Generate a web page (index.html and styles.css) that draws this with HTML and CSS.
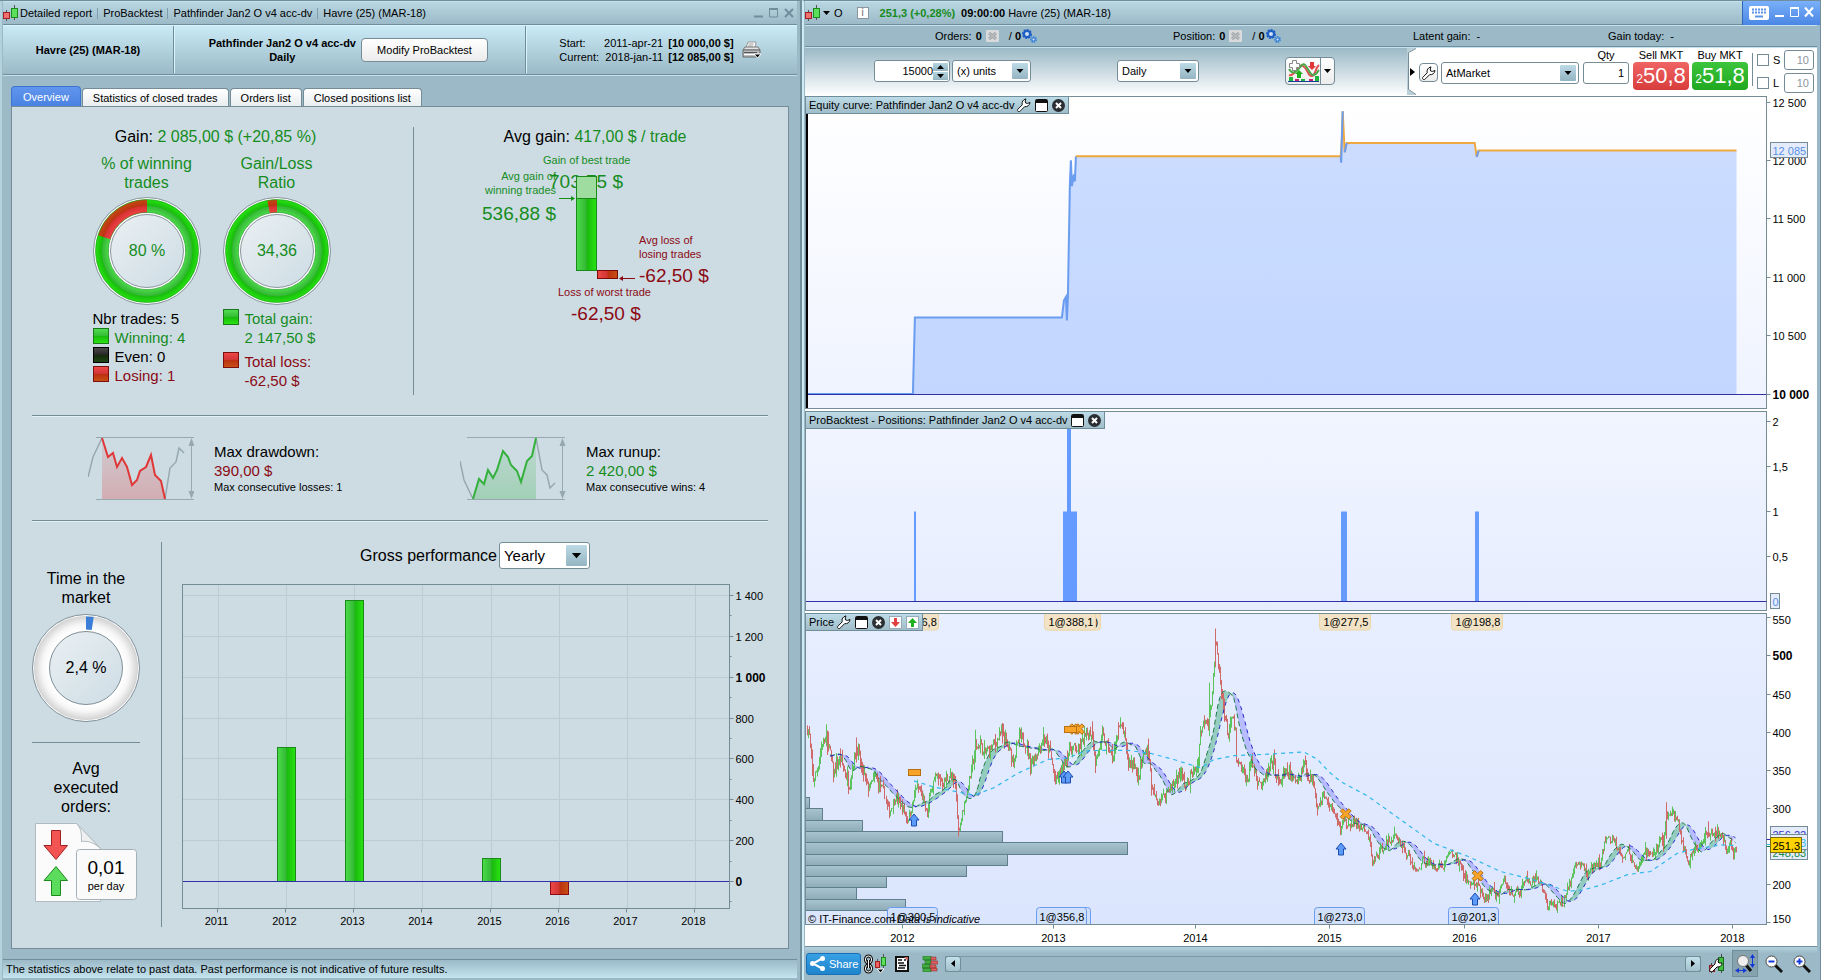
FILE: index.html
```html
<!DOCTYPE html>
<html lang="en">
<head>
    <meta charset="UTF-8">
    <meta name="viewport" content="width=device-width, initial-scale=1.0">
    <title>Detailed report - ProBacktest</title>
    <link rel="stylesheet" href="styles.css">
</head>
<body>

<!-- shared gradients and icons -->
<svg class="defs" width="0" height="0" aria-hidden="true">
    <defs>
        <linearGradient id="g-green" x1="0" x2="1" y1="0" y2="0">
            <stop offset="0" stop-color="#4bdc4b"/><stop offset=".49" stop-color="#34b834"/>
            <stop offset=".51" stop-color="#18b90c"/><stop offset="1" stop-color="#2ae314"/>
        </linearGradient>
        <linearGradient id="g-red" x1="0" x2="1" y1="0" y2="0">
            <stop offset="0" stop-color="#ee4848"/><stop offset=".49" stop-color="#d23434"/>
            <stop offset=".51" stop-color="#bb3010"/><stop offset="1" stop-color="#c85014"/>
        </linearGradient>
        <radialGradient id="r-green" gradientUnits="userSpaceOnUse" cx="54" cy="54" r="52">
            <stop offset=".73" stop-color="#4edc4e"/><stop offset=".86" stop-color="#34b834"/>
            <stop offset=".88" stop-color="#18bd0c"/><stop offset="1" stop-color="#28e612"/>
        </radialGradient>
        <radialGradient id="r-red" gradientUnits="userSpaceOnUse" cx="54" cy="54" r="52">
            <stop offset=".73" stop-color="#ee4444"/><stop offset=".86" stop-color="#d63232"/>
            <stop offset=".88" stop-color="#bd3412"/><stop offset="1" stop-color="#c44c14"/>
        </radialGradient>
        <radialGradient id="r-white" gradientUnits="userSpaceOnUse" cx="54" cy="54" r="52">
            <stop offset=".73" stop-color="#fff"/><stop offset=".84" stop-color="#f6f6f6"/>
            <stop offset="1" stop-color="#d2d2d2"/>
        </radialGradient>
        <linearGradient id="g-disc" x1="0" x2="1" y1="0" y2="1">
            <stop offset="0" stop-color="#eaf0f3"/><stop offset="1" stop-color="#cddce4"/>
        </linearGradient>
        <linearGradient id="g-dd" x1="0" x2="0" y1="0" y2="1">
            <stop offset="0" stop-color="#e04040" stop-opacity=".1"/><stop offset="1" stop-color="#e04040" stop-opacity=".3"/>
        </linearGradient>
        <linearGradient id="g-ru" x1="0" x2="0" y1="0" y2="1">
            <stop offset="0" stop-color="#3cb44a" stop-opacity=".1"/><stop offset="1" stop-color="#3cb44a" stop-opacity=".3"/>
        </linearGradient>
        <symbol id="i-candles" viewBox="0 0 16 17">
            <path d="M3.500 5v11M11.500 0v15" stroke="#555"/>
            <rect x=".5" y="7.500" width="6" height="6" fill="#f07070" stroke="#a02020"/>
            <rect x="8.500" y="3.500" width="6" height="9" fill="#5ce05c" stroke="#1c8a1c"/>
        </symbol>
        <symbol id="i-wrench" viewBox="0 0 14 14">
            <path d="M1 13.300c-1-.9-.6-1.600.2-2.400l4-4C4.500 4 6 1.500 9 .9L8.200 3l.4 2 2 .4L13 4.500c-.4 3-2.600 4.500-5.400 4.200l-4 4c-.9.900-1.700 1.300-2.600.6z" fill="#fff" stroke="#111"/>
        </symbol>
        <symbol id="i-window" viewBox="0 0 13 13">
            <rect x=".5" y=".5" width="12" height="12" rx="1" fill="#fff" stroke="#111"/>
            <rect x="1" y="1" width="11" height="3" fill="#111"/>
        </symbol>
        <symbol id="i-close" viewBox="0 0 13 13">
            <circle cx="6.500" cy="6.500" r="6.500" fill="#2b2f33"/>
            <path d="M4 4l5 5M9 4l-5 5" stroke="#fff" stroke-width="2"/>
        </symbol>
        <symbol id="i-cancel" viewBox="0 0 13 12">
            <rect width="13" height="12" rx="1" fill="#d8dadb"/>
            <path d="M3 3l7 6M10 3l-7 6" stroke="#a4a8aa" stroke-width="3"/>
            <path d="M3 3l7 6M10 3l-7 6" stroke="#c2c5c6" stroke-width="1"/>
        </symbol>
        <symbol id="i-gears" viewBox="0 0 15 14">
            <circle cx="5" cy="5" r="4" fill="none" stroke="#1f5fc4" stroke-width="2" stroke-dasharray="2 1"/>
            <circle cx="5" cy="5" r="3" fill="#cfe2f4" stroke="#1f5fc4" stroke-width="2"/>
            <circle cx="11.500" cy="10.500" r="2.500" fill="none" stroke="#3f8ae0" stroke-width="2" stroke-dasharray="1.500 .7"/>
            <circle cx="11.500" cy="10.500" r="1.500" fill="#cfe2f4" stroke="#2f74d0"/>
        </symbol>
    </defs>
</svg>

<div class="desktop">

    <!-- report window -->
    <section class="window report">
        <header class="titlebar">
            <svg class="ico-candles"><use href="#i-candles"/></svg>
            <span>Detailed report</span><i></i>
            <span>ProBacktest</span><i></i>
            <span>Pathfinder Jan2 O v4 acc-dv</span><i></i>
            <span>Havre (25) (MAR-18)</span>
            <svg class="win-btns" width="42" height="12" viewBox="0 0 42 12" fill="none" stroke="#6f8d9b">
                <path d="M1 9.500h9" stroke-width="2"/>
                <path d="M16.500 2v8h8V1.500h-8z"/><path d="M16 2h9" stroke-width="2"/>
                <path d="M32 2l8 8M40 2l-8 8" stroke-width="2"/>
            </svg>
        </header>

        <div class="report-head">
            <div class="head-cell head-name">Havre (25) (MAR-18)</div>
            <div class="head-cell head-system">
                <div>Pathfinder Jan2 O v4 acc-dv<br>Daily</div>
                <button class="btn">Modify ProBacktest</button>
            </div>
            <div class="head-cell head-dates">
                <dl>
                    <dt>Start:</dt><dd>2011-apr-21</dd><dd><b>[10 000,00 $]</b></dd>
                    <dt>Current:</dt><dd>2018-jan-11</dd><dd><b>[12 085,00 $]</b></dd>
                </dl>
                <button class="icon-btn" aria-label="Print">
                    <svg width="19" height="18" viewBox="0 0 19 18">
                        <path d="M6 1h8l-1 6H4z" fill="#fff" stroke="#999"/>
                        <path d="M6.500 3h5M6 5h5" stroke="#999"/>
                        <path d="M3 6h13l2 3H1z" fill="#e4e4e4" stroke="#777"/>
                        <path d="M1 9h17v5l-2 2H1z" fill="#b8bcbe" stroke="#666"/>
                        <path d="M2 11.500h13" stroke="#555"/><path d="M2 13.500h11" stroke="#fff"/>
                        <path d="M12 13h7l-3.500 4z" fill="#000" stroke="#fff"/>
                    </svg>
                </button>
            </div>
        </div>

        <nav class="tabs">
            <button class="tab active">Overview</button>
            <button class="tab">Statistics of closed trades</button>
            <button class="tab">Orders list</button>
            <button class="tab">Closed positions list</button>
        </nav>

        <div class="panel">
            <div class="row-gain">
                <div class="gain">
                    <h2>Gain: <span class="green">2 085,00 $ (+20,85 %)</span></h2>
                    <div class="donuts">
                        <div>
                            <h3 class="green">% of winning<br>trades</h3>
                            <svg class="donut" width="108" height="108" viewBox="0 0 108 108" fill="none">
                                <circle cx="54" cy="54" r="52.500" fill="#fff" stroke="#fff"/>
                                <circle cx="54" cy="54" r="53.500" stroke="#8b979d"/>
                                <circle cx="54" cy="54" r="45" stroke="url(#r-green)" stroke-width="13"/>
                                <circle cx="54" cy="54" r="45" stroke="url(#r-red)" stroke-width="13" pathLength="100" stroke-dasharray="20 80" stroke-dashoffset="-80" transform="rotate(-90 54 54)"/>
                                <circle cx="54" cy="54" r="51.500" stroke="#1c9a1c" stroke-width=".6"/>
                                <circle cx="54" cy="54" r="38.500" stroke="#1c8a1c" stroke-width=".6"/>
                                <circle cx="54" cy="54" r="37" fill="#fff" stroke="#fff" stroke-width="2"/>
                                <circle cx="54" cy="54" r="36.500" fill="url(#g-disc)" stroke="#8b979d"/>
                                <text x="54" y="59" text-anchor="middle" class="t16 fgreen">80 %</text>
                            </svg>
                            <ul class="legend">
                                <li>Nbr trades: 5</li>
                                <li class="green"><i class="sw sw-green"></i>Winning: 4</li>
                                <li><i class="sw sw-black"></i>Even: 0</li>
                                <li class="red"><i class="sw sw-red"></i>Losing: 1</li>
                            </ul>
                        </div>
                        <div>
                            <h3 class="green">Gain/Loss<br>Ratio</h3>
                            <svg class="donut" width="108" height="108" viewBox="0 0 108 108" fill="none">
                                <circle cx="54" cy="54" r="52.500" fill="#fff" stroke="#fff"/>
                                <circle cx="54" cy="54" r="53.500" stroke="#8b979d"/>
                                <circle cx="54" cy="54" r="45" stroke="url(#r-green)" stroke-width="13"/>
                                <circle cx="54" cy="54" r="45" stroke="url(#r-red)" stroke-width="13" pathLength="100" stroke-dasharray="3 97" stroke-dashoffset="-97" transform="rotate(-90 54 54)"/>
                                <circle cx="54" cy="54" r="51.500" stroke="#1c9a1c" stroke-width=".6"/>
                                <circle cx="54" cy="54" r="38.500" stroke="#1c8a1c" stroke-width=".6"/>
                                <circle cx="54" cy="54" r="37" fill="#fff" stroke="#fff" stroke-width="2"/>
                                <circle cx="54" cy="54" r="36.500" fill="url(#g-disc)" stroke="#8b979d"/>
                                <text x="54" y="59" text-anchor="middle" class="t16 fgreen">34,36</text>
                            </svg>
                            <ul class="legend">
                                <li class="green"><i class="sw sw-green"></i>Total gain:<br>2 147,50 $</li>
                                <li class="red loss"><i class="sw sw-red"></i>Total loss:<br>-62,50 $</li>
                            </ul>
                        </div>
                    </div>
                </div>

                <div class="avg">
                    <h2>Avg gain: <span class="green">417,00 $ / trade</span></h2>
                    <svg width="240" height="176" viewBox="475 150 240 176">
                        <g class="fgreen">
                            <text x="543" y="164" class="t11">Gain of best trade</text>
                            <text x="549" y="188" class="t19">703,75 $</text>
                            <text x="556" y="180" class="t11" text-anchor="end">Avg gain of</text>
                            <text x="556" y="194" class="t11" text-anchor="end">winning trades</text>
                            <text x="556" y="220" class="t19" text-anchor="end">536,88 $</text>
                        </g>
                        <rect x="576.500" y="176.500" width="20" height="22" fill="#9fdc9f" stroke="#1a8a1a"/>
                        <rect x="576.500" y="198.500" width="20" height="72" fill="url(#g-green)" stroke="#1a8a1a"/>
                        <rect x="597.500" y="270.500" width="20" height="8" fill="url(#g-red)" stroke="#7a0a0a"/>
                        <path d="M559 198.500h13" stroke="#149014"/><path d="M571 196l4 2.500-4 2.500z" fill="#149014"/>
                        <path d="M622 278.500h13" stroke="#8b0a14"/><path d="M623 276l-4 2.500 4 2.500z" fill="#8b0a14"/>
                        <g class="fred">
                            <text x="639" y="244" class="t11">Avg loss of</text>
                            <text x="639" y="258" class="t11">losing trades</text>
                            <text x="639" y="282" class="t19">-62,50 $</text>
                            <text x="558" y="296" class="t11">Loss of worst trade</text>
                            <text x="571" y="320" class="t19">-62,50 $</text>
                        </g>
                    </svg>
                </div>
            </div>

            <div class="row-max">
                <div class="max">
                    <svg width="106" height="65" viewBox="0 0 106 65" fill="none" stroke="#98a8b0">
                        <path d="M8 1.500h98M8 63.500h98" stroke-width="1"/>
                        <path d="M103.500 4v57"/><path d="M103.500 2l3 8h-6zM103.500 63l3-8h-6z" fill="#98a8b0" stroke="none"/>
                        <path d="M0 41L5 21L14 2M77 63L82 32L88 26L91 12L96 17" stroke-width="1.500"/>
                        <path d="M14 2L20 21L25 17L29 31L34 22L39 31L44 49L49 44L52 35L58 31L63 19L67 39L73 45L77 63H14z" fill="url(#g-dd)" stroke="none"/>
                        <path d="M14 2L20 21L25 17L29 31L34 22L39 31L44 49L49 44L52 35L58 31L63 19L67 39L73 45L77 63" stroke="#e03838" stroke-width="2"/>
                    </svg>
                    <div>
                        <p>Max drawdown:</p>
                        <p class="red">390,00 $</p>
                        <small>Max consecutive losses: 1</small>
                    </div>
                </div>
                <div class="max">
                    <svg width="106" height="65" viewBox="0 0 106 65" fill="none" stroke="#98a8b0">
                        <path d="M7 1.500h98M7 63.500h98"/>
                        <path d="M102.500 4v57"/><path d="M102.500 2l3 8h-6zM102.500 63l3-8h-6z" fill="#98a8b0" stroke="none"/>
                        <path d="M0 25L4 44L13 63M76 2L82 34L87 39L90 52L95 47" stroke-width="1.500"/>
                        <path d="M13 63L19 43L24 48L28 34L33 42L37 34L43 15L48 21L51 29L57 35L61 46L67 25L72 20L76 2V63z" fill="url(#g-ru)" stroke="none"/>
                        <path d="M13 63L19 43L24 48L28 34L33 42L37 34L43 15L48 21L51 29L57 35L61 46L67 25L72 20L76 2" stroke="#34b03c" stroke-width="2"/>
                    </svg>
                    <div>
                        <p>Max runup:</p>
                        <p class="green">2 420,00 $</p>
                        <small>Max consecutive wins: 4</small>
                    </div>
                </div>
            </div>

            <div class="row-perf">
                <div class="market">
                    <h3>Time in the<br>market</h3>
                    <svg class="donut" width="108" height="108" viewBox="0 0 108 108" fill="none">
                        <circle cx="54" cy="54" r="53" fill="#fff" stroke="#fff"/>
                        <circle cx="54" cy="54" r="53.500" stroke="#7f8f97"/>
                        <circle cx="54" cy="54" r="45" stroke="url(#r-white)" stroke-width="14"/>
                        <circle cx="54" cy="54" r="45" stroke="#3a7ed8" stroke-width="13" pathLength="100" stroke-dasharray="2.400 97.600" transform="rotate(-90 54 54)"/>
                        <circle cx="54" cy="54" r="36.500" fill="url(#g-disc)" stroke="#7f8f97"/>
                        <text x="54" y="59" text-anchor="middle" fill="#000" class="t16">2,4 %</text>
                    </svg>
                    <hr>
                    <h3>Avg<br>executed<br>orders:</h3>
                    <svg class="orders" width="102" height="80" viewBox="0 0 102 80">
                        <path d="M.5.5h41l24 25v53H.5z" fill="#fbfbfb" stroke="#b0bac0"/>
                        <path d="M41.500.5c5 5 5 10 5 18 8-1 13 2 19 7z" fill="#eef0f1" stroke="#b0bac0"/>
                        <path d="M16.500 7.500h9v15h7l-11.500 14-12-14h7.500z" fill="#f25454" stroke="#a02020"/>
                        <path d="M16.500 72.500h9v-15h7l-11.500-14-12 14h7.500z" fill="#5cdc5c" stroke="#1c8a1c"/>
                        <rect x="41.500" y="26.500" width="60" height="50" rx="3" fill="#fafafa" stroke="#a4b0b6"/>
                        <text x="71" y="51" text-anchor="middle" class="t19">0,01</text>
                        <text x="71" y="67" text-anchor="middle" class="t11">per day</text>
                    </svg>
                </div>
                <div class="perf">
                    <div class="perf-head">
                        <label for="period">Gross performance</label>
                        <select id="period" class="select big"><option>Yearly</option></select>
                    </div>
                    <div class="chart" id="chart-perf"></div>
                </div>
            </div>
        </div>

        <footer class="statusbar">The statistics above relate to past data. Past performance is not indicative of future results.</footer>
    </section>

    <!-- trading window -->
    <section class="window trading">
        <header class="titlebar">
            <svg class="ico-candles"><use href="#i-candles"/></svg>
            <svg width="7" height="4" viewBox="0 0 7 4"><path d="M0 0h7L3.500 4z"/></svg>
            <span class="code">O</span>
            <button class="info" aria-label="Information">i</button>
            <b class="green quote">251,3 (+0,28%)</b>
            <b>09:00:00</b>
            <span>Havre (25) (MAR-18)</span>
            <div class="win-active">
                <svg width="66" height="15" viewBox="0 0 66 15">
                    <rect width="20" height="14" rx="2" fill="#fff"/>
                    <path d="M3 3.500h14M3 6.500h14" stroke="#5a94ea" stroke-width="2" stroke-dasharray="2 1"/>
                    <path d="M6 10.500h8" stroke="#5a94ea" stroke-width="2"/>
                    <path d="M26 10h9M41 2h9" stroke="#fff" stroke-width="2"/>
                    <path d="M41.500 2v8.500h8V2" stroke="#fff" fill="none"/>
                    <path d="M56 1.500l8 9M64 1.500l-8 9" stroke="#fff" stroke-width="2"/>
                </svg>
            </div>
        </header>

        <div class="account">
            <span>Orders: <b>0</b> <svg width="13" height="12"><use href="#i-cancel"/></svg> <em>/ <b>0</b></em><svg width="15" height="14"><use href="#i-gears"/></svg></span>
            <span>Position: <b>0</b> <svg width="13" height="12"><use href="#i-cancel"/></svg> <em>/ <b>0</b></em><svg width="15" height="14"><use href="#i-gears"/></svg></span>
            <span>Latent gain: &nbsp;-</span>
            <span>Gain today: &nbsp;-</span>
        </div>

        <div class="toolbar">
            <div class="tools">
                <div class="group">
                    <div class="spin">
                        <input type="text" value="15000" aria-label="Number of units">
                        <div>
                            <button aria-label="More"><svg width="7" height="4" viewBox="0 0 7 4"><path d="M0 4h7L3.500 0z"/></svg></button>
                            <button aria-label="Less"><svg width="7" height="4" viewBox="0 0 7 4"><path d="M0 0h7L3.500 4z"/></svg></button>
                        </div>
                    </div>
                    <select class="select units" aria-label="Unit"><option>(x) units</option></select>
                </div>
                <select class="select daily" aria-label="Timeframe"><option>Daily</option></select>
                <button class="btn indic" aria-label="Add indicator">
                    <svg width="33" height="24" viewBox="0 0 33 24" fill="none">
                        <path d="M2 16c6 2 9-12 14-9s5 11 9 10 3-8 7-11" stroke="#e05050" stroke-width="2"/>
                        <path d="M2 10c5 8 9 0 13-4s7 10 11 10 4-3 6-5" stroke="#48a848" stroke-width="2"/>
                        <path d="M10 19v-4H8l4-4 4 4h-2v4z" fill="#20b020"/><path d="M23 3v4h-2l4 4 4-4h-2V3z" fill="#e03838"/>
                        <path d="M5.500 1.500h4v3h3v4h-3v3h-4v-3h-3v-4h3z" fill="#fff" stroke="#888"/>
                        <path d="M2 18h4v4H2zM14 20h4v2h-4zM28 17h4v5h-4z" fill="#20b838"/><path d="M8 20h4v2H8zM22 20h4v2h-4z" fill="#c02870"/>
                        <path d="M1 22.500h31" stroke="#143c9c"/>
                    </svg>
                    <span><svg width="7" height="4" viewBox="0 0 7 4"><path d="M0 0h7L3.500 4z"/></svg></span>
                </button>
            </div>
            <div class="order">
                <svg class="handle" width="12" height="48" viewBox="0 0 12 48">
                    <path d="M0 0H9L1.500 4V42L9 47H0z" fill="#b9ced7"/>
                    <path d="M9 .5L1.500 4.500V41.500L9 46.500" fill="none" stroke="#758c97"/>
                    <path d="M3 20v8l5-4z"/>
                </svg>
                <button class="btn wrench" aria-label="Order settings"><svg width="14" height="14"><use href="#i-wrench"/></svg></button>
                <select class="select market-type" aria-label="Order type"><option>AtMarket</option></select>
                <div class="stack">
                    <label for="qty">Qty</label>
                    <input id="qty" type="text" value="1">
                </div>
                <div class="stack">
                    <span>Sell MKT</span>
                    <button class="deal sell"><small>2</small>50,8</button>
                </div>
                <div class="stack">
                    <span>Buy MKT</span>
                    <button class="deal buy"><small>2</small>51,8</button>
                </div>
                <div class="stops">
                    <label><input type="checkbox"> <span>S</span><input type="text" value="10" aria-label="Stop distance"></label>
                    <label><input type="checkbox"> <span>L</span><input type="text" value="10" aria-label="Limit distance"></label>
                </div>
            </div>
        </div>

        <div class="charts">
            <div class="pane pane-equity">
                <div class="chart" id="chart-equity"></div>
                <div class="pane-head">
                    <span>Equity curve: Pathfinder Jan2 O v4 acc-dv</span>
                    <svg width="14" height="14"><use href="#i-wrench"/></svg>
                    <svg width="13" height="13"><use href="#i-window"/></svg>
                    <svg width="13" height="13"><use href="#i-close"/></svg>
                </div>
            </div>
            <div class="pane pane-pos">
                <div class="chart" id="chart-pos"></div>
                <div class="pane-head">
                    <span>ProBacktest - Positions: Pathfinder Jan2 O v4 acc-dv</span>
                    <svg width="13" height="13"><use href="#i-window"/></svg>
                    <svg width="13" height="13"><use href="#i-close"/></svg>
                </div>
            </div>
            <div class="pane pane-price">
                <div class="chart" id="chart-price"></div>
                <div class="pane-head">
                    <span>Price</span>
                    <svg width="14" height="14"><use href="#i-wrench"/></svg>
                    <svg width="13" height="13"><use href="#i-window"/></svg>
                    <svg width="13" height="13"><use href="#i-close"/></svg>
                    <svg width="13" height="13" viewBox="0 0 13 13"><rect x=".5" y=".5" width="12" height="12" fill="#fff" stroke="#9ab"/><path d="M5 2h3v4h3l-4.500 5L2 6h3z" fill="#e04040"/></svg>
                    <svg width="13" height="13" viewBox="0 0 13 13"><rect x=".5" y=".5" width="12" height="12" fill="#fff" stroke="#9ab"/><path d="M5 11h3V7h3L6.500 2 2 7h3z" fill="#20b020"/></svg>
                </div>
            </div>
        </div>

        <footer class="bottombar">
            <button class="share">
                <svg width="15" height="15" viewBox="0 0 15 15"><path d="M13 2L3 7.500 13 13" fill="none" stroke="#fff" stroke-width="2"/><circle cx="12.500" cy="2.500" r="2.500" fill="#fff"/><circle cx="2.500" cy="7.500" r="2.500" fill="#fff"/><circle cx="12.500" cy="12.500" r="2.500" fill="#fff"/></svg>
                Share
            </button>
            <button class="icon-btn" aria-label="Link windows">
                <svg width="24" height="20" viewBox="0 0 24 20" fill="none">
                    <rect x="1.500" y="2" width="6" height="7" rx="3" stroke="#111" stroke-width="3"/><rect x="1.500" y="11" width="6" height="7" rx="3" stroke="#111" stroke-width="3"/>
                    <rect x="1.500" y="2" width="6" height="7" rx="3" stroke="#fff"/><rect x="1.500" y="11" width="6" height="7" rx="3" stroke="#fff"/><path d="M4.500 6v8" stroke="#111" stroke-width="3"/><path d="M4.500 6v8" stroke="#fff"/>
                    <path d="M13.500 5v10M19.500 0v14" stroke="#555"/><rect x="11.500" y="7.500" width="4" height="6" fill="#f06060" stroke="#a02020"/><rect x="17.500" y="3.500" width="4" height="8" fill="#5ce05c" stroke="#1c8a1c"/>
                    <path d="M13 15h7l-3.500 4z" fill="#000" stroke="#fff"/>
                </svg>
            </button>
            <button class="icon-btn" aria-label="News">
                <svg width="14" height="16" viewBox="0 0 14 16"><rect x="1" y="1" width="12" height="14" fill="#fff" stroke="#111" stroke-width="2"/><path d="M3 4h4M3 7h6M4 9.500h7M3 12h7M9 4h2" stroke="#111" stroke-width="1.500"/><path d="M9 1h4v4z" fill="#c06060"/></svg>
            </button>
            <button class="icon-btn book" aria-label="Order book">
                <svg width="16" height="16" viewBox="0 0 16 16"><path d="M1 0h8v4H1zM3 4h6v4H3zM0 8h8v4H0zM1 12h8v4H1z" fill="#3fae3f" stroke="#2a6a2a" stroke-width=".6"/><path d="M9 1h5v3H9zM9 5h7v3H9zM8 9h6v3H8zM9 12h6v3H9z" fill="#e06060" stroke="#8a3030" stroke-width=".6"/></svg>
            </button>
            <div class="scroll">
                <button aria-label="Scroll left"><svg width="4" height="7" viewBox="0 0 4 7"><path d="M4 0v7L0 3.500z"/></svg></button>
                <button aria-label="Scroll right"><svg width="4" height="7" viewBox="0 0 4 7"><path d="M0 0v7l4-3.500z"/></svg></button>
            </div>
            <button class="icon-btn" aria-label="Chart settings">
                <svg width="17" height="20" viewBox="0 0 17 20"><path d="M3.500 9v10M13.500 0v19" stroke="#444"/><rect x="1.500" y="11.500" width="5" height="6" fill="#d06060" stroke="#802020"/><rect x="10.500" y="3.500" width="5" height="13" fill="#3fc03f" stroke="#1c6a1c"/><path d="M2 17c-1-1 0-2 1-3l4-4c0-3 1-5 4-5l-1 3 1 1h3c0 3-2 4-5 4l-4 4c-1 1-2 1-3 0z" fill="#fff" stroke="#111"/></svg>
            </button>
            <button class="icon-btn pressed" aria-label="Auto zoom">
                <svg width="20" height="19" viewBox="0 0 20 19"><path d="M11 11l5 6" stroke="#111" stroke-width="3"/><circle cx="8" cy="7" r="5.500" fill="#eee" stroke="#777"/><path d="M17.500 3v8M3 16.500h6" stroke="#1438d8"/><path d="M15 4l2.500-4L20 4zM15 10l2.500 4 2.500-4zM4 14l-4 2.500L4 19zM8 14l4 2.500L8 19z" fill="#1438d8"/></svg>
            </button>
            <button class="icon-btn" aria-label="Zoom out">
                <svg width="18" height="18" viewBox="0 0 18 18"><path d="M10 10l7 7" stroke="#111" stroke-width="3"/><circle cx="6.500" cy="6.500" r="5.500" fill="#fff" stroke="#444"/><path d="M3.500 6.500h6" stroke="#1438d8" stroke-width="2"/></svg>
            </button>
            <button class="icon-btn zoom-in" aria-label="Zoom in">
                <svg width="18" height="18" viewBox="0 0 18 18"><path d="M10 10l7 7" stroke="#111" stroke-width="3"/><circle cx="6.500" cy="6.500" r="5.500" fill="#fff" stroke="#444"/><path d="M3.500 6.500h6M6.500 3.500v6" stroke="#1438d8" stroke-width="2"/></svg>
            </button>
        </footer>
    </section>
</div>

<script src="charts.js"></script>
</body>
</html>
```
FILE: styles.css
```css
* {
    box-sizing: border-box;
}

body {
    margin: 0;
    font-family: "Liberation Sans", Arial, sans-serif;
    font-size: 11px;
    line-height: 14px;
    color: #000;
    background-color: #9bb9c6;
}

h2, h3, p, ul, dl, dd {
    margin: 0;
    padding: 0;
    font-weight: normal;
}

h2 {
    font-size: 16px;
    line-height: 20px;
}

h3 {
    font-size: 16px;
    line-height: 19px;
}

button, input, select {
    font: inherit;
    color: inherit;
    margin: 0;
    padding: 0;
}

svg {
    display: block;
    flex-shrink: 0;
}

.defs {
    position: absolute;
}

.green { color: #168c1e; }
.red { color: #8b0a14; }
.fgreen { fill: #168c1e; }
.fred { fill: #8b0a14; }
.t11 { font-size: 11px; }
.t16 { font-size: 16px; }
.t19 { font-size: 19px; }

/* windows */
.desktop {
    display: grid;
    grid-template-columns: 802fr 1019fr;
    height: 100vh;
    min-height: 980px;
}

.window {
    display: flex;
    flex-direction: column;
    min-width: 0;
    border: solid #6f8d9b;
    border-width: 1px 0 0 0;
    background-color: #9bb9c6;
}

.report {
    border-right-width: 2px;
    padding: 0 3px 2px 3px;
    box-shadow: inset 2px 0 #b4d2de;
}

.trading {
    border-right-width: 1px;
    border-left: 2px solid #cdeaf5;
    padding: 0 3px 0 1px;
}

.titlebar {
    display: flex;
    align-items: center;
    height: 24px;
    flex-shrink: 0;
    border-top: 1px solid #c4e2ee;
    border-bottom: 1px solid #6f8d9b;
    background: linear-gradient(#b9d7e3, #9bb9c6);
}

.titlebar i {
    width: 1px;
    height: 11px;
    margin: 0 5px;
    background-color: #7f9dab;
}

.ico-candles {
    width: 16px;
    height: 17px;
    margin-right: 2px;
}

.report .ico-candles {
    margin-right: 1px;
}

.win-btns {
    margin-left: auto;
    margin-right: 2px;
}

/* report header */
.report-head {
    display: grid;
    grid-template-columns: 171fr 352fr 271fr;
    height: 50px;
    flex-shrink: 0;
    padding-bottom: 1px;
    border-top: 1px solid #d9f3fc;
    border-bottom: 1px solid #6f8d9b;
    box-shadow: 0 1px #c4e2ee;
    background: linear-gradient(#c9eaf6, #9bb9c6);
}

.head-cell {
    display: flex;
    align-items: center;
    justify-content: center;
    border-right: 1px solid #6f8d9b;
}

.head-cell + .head-cell {
    border-left: 1px solid #d9f3fc;
}

.head-cell:last-child {
    border-right: 0;
}

.head-name, .head-system {
    font-weight: bold;
    text-align: center;
}

.head-system {
    justify-content: flex-end;
    gap: 5px;
    padding-right: 37px;
}

.head-dates {
    gap: 8px;
    padding-right: 4px;
}

.head-dates dl {
    display: grid;
    grid-template-columns: auto auto auto;
    column-gap: 5px;
}

.head-dates dd {
    text-align: right;
}

.btn {
    border: 1px solid #758c97;
    border-radius: 4px;
    background: linear-gradient(#fff, #ececec);
    font-weight: normal;
}

.head-system .btn {
    width: 127px;
    height: 24px;
}

.icon-btn {
    border: 0;
    background: none;
}

/* tabs */
.tabs {
    display: flex;
    align-items: flex-end;
    gap: 1px;
    padding: 11px 8px 0 8px;
}

.tab {
    height: 18px;
    padding: 0 10px;
    border: 1px solid #758c97;
    border-bottom: 0;
    border-radius: 4px 4px 0 0;
    background: linear-gradient(#fff, #e9eef0);
}

.tab.active {
    height: 20px;
    padding: 0 11px;
    border-color: #3d74d0;
    background: linear-gradient(#6196ee, #4a82e2);
    color: #fff;
}

.panel {
    display: flex;
    flex-direction: column;
    flex: 1;
    min-height: 0;
    margin: 0 8px;
    padding: 0 20px;
    border: 1px solid #758c97;
    background-color: #cddce3;
    font-size: 15px;
    line-height: 19px;
}

/* gain row */
.row-gain {
    display: grid;
    grid-template-columns: 382fr 354fr;
    padding: 20px 0;
    border-bottom: 1px solid #758c97;
    box-shadow: 0 1px #e3f1f7;
    text-align: center;
}

.gain {
    padding-right: 14px;
    border-right: 1px solid #758c97;
}

.donuts {
    display: flex;
    justify-content: center;
    gap: 22px;
    margin-top: 7px;
    padding-right: 8px;
    height: 241px;
}

.donuts > div {
    width: 108px;
}

.donuts h3 {
    white-space: nowrap;
}

.donut {
    margin: 5px 0 4px 0;
}

.legend {
    list-style: none;
    text-align: left;
    white-space: nowrap;
}

.legend li {
    display: flex;
    gap: 6px;
}

.legend .loss {
    margin-top: 5px;
}

.sw {
    width: 16px;
    height: 16px;
    border: 1px solid #1a7a1a;
}

.sw-green { background: linear-gradient(#4fdc4f, #35bc35 49%, #17bb0c 51%, #2ae314); }
.sw-black { background: linear-gradient(#4a4a4a, #262626 49%, #142a0c 51%, #1f4414); border-color: #000; }
.sw-red { background: linear-gradient(#ee4848, #d23434 49%, #bb3010 51%, #c85014); border-color: #7a1010; }

.avg {
    display: flex;
    flex-direction: column;
    align-items: center;
    gap: 3px;
    padding-left: 8px;
}

/* drawdown and runup */
.row-max {
    display: grid;
    grid-template-columns: 1fr 1fr;
    gap: 8px;
    height: 105px;
    flex-shrink: 0;
    border-bottom: 1px solid #758c97;
    box-shadow: 0 1px #e3f1f7;
}

.max {
    display: flex;
    align-items: center;
    gap: 20px;
    padding-left: 56px;
}

.max small {
    display: block;
    font-size: 11px;
    line-height: 14px;
}

/* performance */
.row-perf {
    display: flex;
    flex: 1;
    min-height: 0;
    padding: 21px 0;
}

.market {
    display: flex;
    flex-direction: column;
    width: 130px;
    padding: 27px 21px 0 0;
    border-right: 1px solid #758c97;
    text-align: center;
}

.market .donut {
    margin: 7px 0 0 0;
}

.market hr {
    width: 100%;
    margin: 20px 0 16px 0;
    border: 0;
    border-top: 1px solid #758c97;
}

.orders {
    margin: 7px 0 0 3px;
}

.perf {
    display: flex;
    flex-direction: column;
    flex: 1;
    min-width: 0;
    padding-left: 20px;
}

.perf-head {
    display: flex;
    align-items: center;
    justify-content: center;
    gap: 2px;
    margin-bottom: 9px;
    font-size: 16px;
}

.chart {
    flex: 1;
    min-width: 0;
    min-height: 0;
    overflow: hidden;
}

.statusbar {
    height: 19px;
    flex-shrink: 0;
    margin-top: 10px;
    padding: 2px 3px;
    border-top: 1px solid #6f8d9b;
    background: linear-gradient(#9bb9c6, #c4e4f0);
}

/* form controls */
.select {
    appearance: none;
    height: 22px;
    padding-left: 4px;
    border: 1px solid #758c97;
    border-radius: 3px;
    background: #fff url("data:image/svg+xml,%3Csvg xmlns='http://www.w3.org/2000/svg' width='16' height='16'%3E%3ClinearGradient id='a' x2='0' y2='1'%3E%3Cstop stop-color='%23bcdbe7'/%3E%3Cstop offset='1' stop-color='%2394b4c1'/%3E%3C/linearGradient%3E%3Crect width='16' height='16' rx='1' fill='url(%23a)'/%3E%3Cpath d='M4.500 6h7L8 10z'/%3E%3C/svg%3E") no-repeat right 2px center;
}

.select.big {
    width: 91px;
    height: 27px;
    background-size: 21px 21px;
    font-size: 15px;
}

input[type="text"] {
    border: 1px solid #758c97;
    border-radius: 3px;
    background-color: #fff;
    text-align: right;
}

/* trading window */
.code {
    margin: 0 14px 0 4px;
}

.info {
    width: 12px;
    height: 12px;
    margin-right: 11px;
    border: 1px solid #8b979d;
    background-color: #fff;
    color: #666;
    font-size: 10px;
    line-height: 10px;
}

.quote {
    margin-right: 6px;
}

.titlebar .quote + b {
    margin-right: 3px;
}

.win-active {
    display: flex;
    align-items: center;
    height: 24px;
    margin: 0 -3px 0 auto;
    padding: 0 5px 0 6px;
    border-left: 1px solid #2f66b8;
    background: linear-gradient(#7ab0fa, #4a86e4);
}

.account {
    display: grid;
    grid-template-columns: 238fr 240fr 195fr 209fr;
    align-items: center;
    height: 22px;
    flex-shrink: 0;
    padding-left: 130px;
    border-top: 1px solid #c4e2ee;
    border-bottom: 1px solid #6f8d9b;
}

.account span {
    display: flex;
    align-items: center;
    gap: 4px;
    white-space: nowrap;
}

.account em {
    margin-left: 6px;
    margin-right: -3px;
    font-style: normal;
}

.toolbar {
    display: flex;
    height: 49px;
    flex-shrink: 0;
    border-top: 1px solid #c4e2ee;
    background: linear-gradient(#9bb9c6, #fff);
}

.tools {
    display: flex;
    align-items: center;
    justify-content: space-between;
    flex: 1;
    padding: 0 72px 2px 69px;
}

.group {
    display: flex;
    gap: 2px;
}

.spin {
    display: flex;
    width: 76px;
    height: 22px;
    padding-right: 1px;
    border: 1px solid #758c97;
    border-radius: 3px;
    background-color: #fff;
}

.spin input[type="text"] {
    flex: 1;
    min-width: 0;
    border: 0;
}

.spin div {
    display: flex;
    flex-direction: column;
    justify-content: center;
    gap: 1px;
}

.spin button {
    display: flex;
    align-items: center;
    justify-content: center;
    width: 15px;
    height: 8px;
    border: 0;
    background: linear-gradient(#b4d4e0, #94b4c1);
}

.units { width: 79px; }
.daily { width: 82px; }

.indic {
    display: flex;
    width: 50px;
    height: 28px;
    padding: 1px 0 0 1px;
}

.indic span {
    display: flex;
    align-items: center;
    justify-content: center;
    flex: 1;
    align-self: stretch;
    margin-top: -1px;
    border-left: 1px solid #758c97;
}

.order {
    display: flex;
    background-color: #fff;
}

.wrench {
    display: flex;
    align-items: center;
    justify-content: center;
    width: 19px;
    height: 19px;
    margin-top: 15px;
}

.market-type {
    width: 138px;
    margin: 14px 4px 0 3px;
}

.stack {
    display: flex;
    flex-direction: column;
    align-items: center;
    margin-right: 4px;
    white-space: nowrap;
}

.stack input[type="text"] {
    width: 46px;
    height: 22px;
    padding-right: 4px;
}

.deal {
    display: flex;
    align-items: baseline;
    justify-content: center;
    width: 56px;
    height: 28px;
    border: 0;
    border-radius: 4px;
    color: #fff;
    font-size: 22px;
    line-height: 28px;
}

.deal small {
    font-size: 12px;
}

.stack + .stack + .stack {
    margin-left: -1px;
}

.sell { background: linear-gradient(#f06464, #d83c3c); }
.buy { background: linear-gradient(#3cc43c, #20a820); }

.stops {
    padding: 2px 3px 0 5px;
    background: linear-gradient(#758c97, #758c97) no-repeat 0 5px / 1px 33px;
}

.stops label {
    display: flex;
    align-items: center;
    gap: 4px;
    height: 19px;
    margin-bottom: 4px;
}

.stops span {
    width: 7px;
}

.stops input[type="checkbox"] {
    appearance: none;
    width: 12px;
    height: 12px;
    border: 1px solid #758c97;
    background-color: #fff;
}

.stops input[type="text"] {
    width: 30px;
    height: 20px;
    padding-right: 4px;
    color: #8b979d;
}

/* chart panes */
.charts {
    display: flex;
    flex-direction: column;
    flex: 1;
    gap: 2px;
    min-height: 0;
    background-color: #fff;
    border-bottom: 1px solid #6f8d9b;
}

.pane {
    display: flex;
    position: relative;
    min-height: 0;
}

.pane-equity { flex: 313 1 0; }
.pane-pos { flex: 200 1 0; }
.pane-price { flex: 333 1 0; }

.pane-head {
    position: absolute;
    top: 0;
    left: 1px;
    display: flex;
    align-items: center;
    gap: 4px;
    height: 18px;
    padding: 0 3px;
    border: 1px solid #6f8d9b;
    border-left: 0;
    background: linear-gradient(#bddce8, #a0bdc9);
}

.pane-head span {
    margin-right: -1px;
}

/* bottom bar */
.bottombar {
    display: flex;
    align-items: center;
    height: 33px;
    flex-shrink: 0;
    padding: 0 6px 0 1px;
    gap: 7px;
    background: linear-gradient(#b4d2de, #9bb9c6 20%);
}

.share {
    display: flex;
    align-items: center;
    gap: 4px;
    height: 22px;
    margin-right: -4px;
    padding: 0 2px 0 3px;
    border: 1px solid #1a70b8;
    border-radius: 3px;
    background: linear-gradient(#38a0e4, #1e84cc);
    color: #fff;
}

.book {
    margin-left: 6px;
}

.scroll {
    display: flex;
    justify-content: space-between;
    flex: 1;
    height: 16px;
    border: 1px solid #7d99a5;
    background-color: #98b6c3;
}

.scroll button {
    display: flex;
    align-items: center;
    justify-content: center;
    width: 16px;
    height: 16px;
    margin: -1px;
    border: 1px solid #6f8d9b;
    border-radius: 3px;
    background: linear-gradient(#c4e0ea, #a4c2ce);
}

.pressed {
    padding: 3px 2px;
    border: 1px solid #6f8d9b;
    background-color: #86a2ae;
}

.zoom-in {
    margin-left: 3px;
}
```
FILE: charts.js
```js
var NS = "http://www.w3.org/2000/svg";
var LINE = "#758c97";

function add(parent, tag, attrs, text) {
    var node = document.createElementNS(NS, tag);
    for (var key in attrs) {
        node.setAttribute(key, attrs[key]);
    }
    if (text !== undefined) node.textContent = text;
    parent.appendChild(node);
    return node;
}

function newSvg(id) {
    var box = document.getElementById(id);
    box.innerHTML = "";
    var w = box.clientWidth, h = box.clientHeight;
    var svg = add(box, "svg", { width: w, height: h, viewBox: "0 0 " + w + " " + h });
    return { svg: svg, w: w, h: h };
}

// snap to the middle of a pixel so that thin lines stay sharp
function snap(v) {
    return Math.floor(v) + 0.5;
}

function line(g, x1, y1, x2, y2, color) {
    return add(g, "path", { d: "M" + x1 + " " + y1 + "L" + x2 + " " + y2, stroke: color || LINE, fill: "none" });
}

function label(g, x, y, text, attrs) {
    var a = { x: x, y: y, "font-size": 11 };
    for (var key in attrs) a[key] = attrs[key];
    return add(g, "text", a, text);
}

function gradient(svg, id, from, to) {
    var g = add(svg, "linearGradient", { id: id, x1: 0, x2: 0, y1: 0, y2: 1 });
    add(g, "stop", { offset: 0, "stop-color": from });
    add(g, "stop", { offset: 1, "stop-color": to });
}

function path(points) {
    return "M" + points.map(function (p) { return p[0].toFixed(1) + " " + p[1].toFixed(1); }).join("L");
}

/* Gross performance, by year */
function drawPerf() {
    var c = newSvg("chart-perf"), g = c.svg;
    var top = 6.5, right = c.w - 38.5, bottom = c.h - 18.5;
    var step = (bottom - top) / 324;
    var zero = top + 297 * step;
    function Y(v) { return snap(zero - v * 0.2043 * step); }
    function X(i) { return snap((36 + i * 68.2) * right / 547); }

    for (var v = -100; v <= 1400; v += 100) {
        var major = v % 200 === 0, y = Y(v);
        if (major) line(g, 0.5, y, right, y, "#bccbd2");
        line(g, right, y, right + (major ? 4 : 2), y);
        if (major) {
            var bold = v === 0 || v === 1000;
            var text = v >= 1000 ? "1 " + String(v).slice(1) : String(v);
            label(g, right + 6, y + 4, text, bold ? { "font-weight": "bold", "font-size": 12 } : {});
        }
    }
    for (var i = 0; i < 8; i++) {
        line(g, X(i), top, X(i), bottom, "#bccbd2");
        line(g, X(i) - 1, bottom, X(i) - 1, bottom + 4);
        label(g, X(i) - 2, bottom + 16, 2011 + i, { "text-anchor": "middle" });
    }
    [[1, 657], [2, 1377], [4, 113], [5, -62]].forEach(function (b) {
        var y = Y(b[1]), z = snap(zero);
        add(g, "rect", {
            x: X(b[0]) - 9, y: Math.min(y, z), width: 18, height: Math.abs(z - y),
            fill: b[1] > 0 ? "url(#g-green)" : "url(#g-red)", stroke: b[1] > 0 ? "#1a8a1a" : "#8b0a14"
        });
    });
    line(g, 0.5, snap(zero), right, snap(zero), "#3030a8");
    add(g, "rect", { x: 0.5, y: top, width: right - 0.5, height: bottom - top, fill: "none", stroke: LINE });
}

/* frame shared by the three panes, indexes run from 0 to 961 */
function frame(c, id, from, to, bottom) {
    gradient(c.svg, id, from, to);
    c.right = c.w - 50.5;
    c.bottom = bottom;
    c.X = function (i) { return 1 + i * (c.right - 1) / 961; };
    add(c.svg, "rect", { x: 0.5, y: 0.5, width: c.right - 0.5, height: bottom - 0.5, fill: "url(#" + id + ")", stroke: LINE });
}

// labels are kept inside the pane when their tick is close to its edge
function tick(c, y, text, bold) {
    y = snap(y);
    line(c.svg, c.right, y, c.right + 4, y);
    var base = Math.max(11, Math.min(y + 4, c.bottom - 2));
    label(c.svg, c.right + 6, base, text, bold ? { "font-weight": "bold", "font-size": 12 } : {});
}

function tag(g, x, y, w, text, color, fill) {
    add(g, "rect", { x: x, y: y, width: w, height: 15, fill: fill || "#e4ecfb", stroke: LINE });
    label(g, x + 2, y + 12, text, { fill: color });
}

function drawEquity() {
    var c = newSvg("chart-equity"), g = c.svg;
    frame(c, "bg-equity", "#ffffff", "#eff3ff", c.h - 0.5);
    var k = c.h / 313;
    function Y(v) { return (298 - (v - 10000) * 0.1168) * k; }
    function P(list) { return list.map(function (p) { return [c.X(p[0]), Y(p[1])]; }); }

    var a = P([[0, 10000], [107, 10000], [109, 10655], [256, 10655], [258, 10800], [260, 10830], [261, 10630], [262, 10830],
        [264, 11800], [265, 12000], [266, 11780], [268, 11880], [269, 11820], [270, 12035]]);
    var b = P([[270, 12035], [535, 12035], [536, 12150], [537, 12420], [539, 12070], [541, 12150], [669, 12150],
        [671, 12030], [673, 12085], [931, 12085]]);
    add(g, "path", { d: path(a.concat(b)) + "V" + Y(10000) + "H1z", fill: "#5a92ff", "fill-opacity": 0.3 });
    add(g, "path", { d: path(a), fill: "none", stroke: "#6a9cf0", "stroke-width": 2 });
    add(g, "path", { d: path(b), fill: "none", stroke: "#eda840", "stroke-width": 2 });
    [[[535, 12035], [535.5, 11980], [536, 12150], [537, 12420]], [[539, 12070], [541, 12150]], [[671, 12030], [673, 12085]]].forEach(function (s) {
        add(g, "path", { d: path(P(s)), fill: "none", stroke: "#6a9cf0", "stroke-width": 2 });
    });
    line(g, 1, snap(Y(10000)), c.right, snap(Y(10000)), "#3030a8");
    add(g, "rect", { x: 1, y: 1, width: 2, height: c.h - 2 });

    tick(c, Y(12500), "12 500");
    tick(c, Y(12000), "12 000");
    tick(c, Y(11500), "11 500");
    tick(c, Y(11000), "11 000");
    tick(c, Y(10500), "10 500");
    tick(c, Y(10000), "10 000", true);
    tag(g, c.right + 4, snap(Y(12085)) - 8, 37, "12 085", "#5c90e8");
}

function drawPositions() {
    var c = newSvg("chart-pos"), g = c.svg;
    frame(c, "bg-pos", "#f1f5ff", "#e6edfe", c.h - 0.5);
    var k = c.h / 200;
    function Y(v) { return snap((190 - v * 90) * k); }

    // start index, width in px, number of contracts
    [[108, 2, 1], [257, 14, 1], [261, 4, 2], [535, 6, 1], [669, 4, 1]].forEach(function (b) {
        add(g, "rect", { x: Math.round(c.X(b[0])), y: Y(b[2]), width: b[1], height: Y(0) - Y(b[2]), fill: "#659bff" });
    });
    line(g, 1, Y(0), c.right, Y(0), "#3030a8");
    tick(c, Y(2), "2");
    tick(c, Y(1.5), "1,5");
    tick(c, Y(1), "1");
    tick(c, Y(0.5), "0,5");
    tag(g, c.right + 4, Y(0) - 8, 9, "0", "#5c90e8");
}

/* price: index, close */
var PRICE = [[2, 405], [4, 395], [8, 337], [12, 352], [17, 385], [22, 395], [28, 346], [35, 364], [44, 331], [51, 381], [57, 350],
    [63, 326], [70, 340], [78, 322], [84, 294], [90, 315], [97, 302], [102, 285], [106, 298], [111, 329], [115, 322],
    [122, 292], [126, 331], [132, 342], [138, 333], [144, 342], [150, 333], [153, 270], [157, 294], [163, 329], [170, 377],
    [175, 385], [178, 372], [185, 377], [192, 390], [197, 399], [202, 381], [208, 364], [215, 394], [221, 385], [225, 359],
    [233, 377], [238, 394], [245, 372], [250, 333], [258, 355], [265, 381], [273, 377], [282, 399], [287, 399], [290, 361],
    [297, 394], [308, 364], [313, 407], [318, 403], [323, 359], [330, 359], [332, 333], [338, 368], [342, 381], [347, 324],
    [352, 307], [358, 316], [368, 333], [376, 346], [380, 326], [385, 342], [392, 355], [395, 399], [400, 420], [403, 412],
    [407, 447], [410, 524], [413, 486], [417, 442], [423, 394], [427, 420], [430, 399], [431, 359], [437, 351], [442, 335],
    [445, 364], [450, 346], [457, 329], [462, 346], [468, 359], [473, 333], [482, 348], [488, 337], [495, 342], [499, 364],
    [502, 342], [508, 337], [512, 302], [518, 316], [528, 298], [535, 272], [538, 289], [543, 272], [548, 283], [558, 272],
    [564, 259], [567, 228], [575, 246], [582, 255], [590, 264], [597, 250], [603, 237], [611, 215], [618, 233], [627, 224],
    [638, 224], [643, 241], [650, 239], [655, 224], [662, 204], [673, 198], [679, 176], [685, 193], [693, 185], [699, 206],
    [705, 189], [715, 189], [720, 206], [725, 202], [733, 206], [738, 193], [742, 172], [748, 174], [758, 176], [762, 193],
    [767, 211], [772, 228], [778, 228], [781, 209], [788, 224], [795, 228], [800, 259], [807, 259], [812, 250], [818, 237],
    [823, 246], [830, 217], [835, 224], [840, 246], [847, 237], [855, 259], [858, 254], [861, 289], [867, 294], [873, 281],
    [878, 250], [883, 230], [890, 246], [895, 248], [900, 268], [908, 268], [917, 266], [921, 241], [925, 257], [928, 239],
    [931, 251]];
var LONG_MA = [[108, 336], [128, 328], [168, 317], [188, 327], [212, 346], [242, 364], [262, 366], [278, 375], [295, 376],
    [322, 376], [345, 372], [368, 364], [395, 353], [408, 364], [428, 369], [462, 371], [498, 374], [512, 364], [523, 348],
    [535, 335], [562, 316], [595, 285], [628, 254], [662, 237], [695, 217], [728, 206], [762, 191], [778, 193], [795, 199],
    [822, 213], [845, 217], [872, 241], [888, 246], [915, 252], [931, 251]];
var PROFILE = [3, 16, 56, 196, 321, 201, 160, 80, 50, 99];

function closes() {
    var out = [], j = 0;
    for (var i = 2; i <= 931; i++) {
        while (PRICE[j + 1][0] < i) j++;
        var a = PRICE[j], b = PRICE[j + 1];
        out.push(a[1] + (b[1] - a[1]) * (i - a[0]) / (b[0] - a[0]));
    }
    return out;
}

function average(list, n) {
    return list.map(function (v, i) {
        var from = Math.max(0, i - n + 1), sum = 0;
        for (var j = from; j <= i; j++) sum += list[j];
        return sum / (i - from + 1);
    });
}

function arrow(g, x, y) {
    add(g, "path", { d: "M" + x + " " + (y - 6) + "l5 6h-2.500v6h-5v-6h-2.500z", fill: "#5c9cf8", stroke: "#1c4cb0" });
}

function cross(g, x, y) {
    add(g, "path", {
        d: "M" + x + " " + (y - 2) + "l3-3 2.500 2.500-3 2.500 3 3-2.500 2.500-3-3-3 3-2.500-2.500 3-3-3-2.500 2.500-2.500z",
        fill: "#f8a428", stroke: "#b87010"
    });
}

function drawPrice() {
    var c = newSvg("chart-price"), g = c.svg;
    frame(c, "bg-price", "#e7eeff", "#dbe5fd", c.h - 21.5);
    gradient(g, "bg-profile", "#a8c4cf", "#8eabb8");
    var k = c.bottom / 312, X = c.X;
    function Y(p) { return (43 + (500 - p) * 0.763) * k; }

    // closed trades, at the top
    [[109, 25, "6,8", 8], [245, 51, ")", 45], [240, 51, "1@388,1", 4], [515, 51, "1@277,5", 4], [647, 51, "1@198,8", 4]].forEach(function (t) {
        add(g, "rect", { x: snap(X(t[0])) - 1, y: -4, width: t[1], height: 21, rx: 3, fill: "#f2e3c6", stroke: "#ecd6a8" });
        label(g, snap(X(t[0])) - 1 + t[3], 13, t[2]);
    });

    // volume profile
    var ph = 11.3 * k;
    PROFILE.forEach(function (v, i) {
        var y = snap(185 * k + i * ph), y2 = snap(185 * k + (i + 1) * ph);
        add(g, "rect", { x: 0.5, y: y, width: Math.round(X(v)), height: y2 - y, fill: "url(#bg-profile)", stroke: "#5f7f8d" });
    });

    // moving averages, filled between
    var list = closes();
    var fast = average(list, 20), slow = average(average(list, 20), 13);
    for (var i = 22; i < list.length - 4; i += 4) {
        add(g, "path", {
            d: path([[X(i + 2), Y(fast[i])], [X(i + 6), Y(fast[i + 4])], [X(i + 6), Y(slow[i + 4])], [X(i + 2), Y(slow[i])]]) + "z",
            fill: fast[i] > slow[i] ? "#46b080" : "#8c8cff", "fill-opacity": 0.5
        });
    }

    // candles
    var seed = 7;
    function rnd() { seed = (seed * 16807) % 2147483647; return seed / 2147483647; }
    var up = "", down = "", prev = list[0];
    list.forEach(function (v, i) {
        var amp = v > 330 ? 11 : 8;
        var close = v + (rnd() - 0.5) * amp * 1.3;
        var high = Math.max(prev, close) + rnd() * rnd() * amp * 1.3;
        var low = Math.min(prev, close) - rnd() * rnd() * amp * 1.3;
        var d = "M" + snap(X(i + 2)) + " " + Y(high).toFixed(1) + "V" + Y(low).toFixed(1);
        if (close >= prev) up += d; else down += d;
        prev = close;
    });
    [[22, 402, 370], [51, 393, 360], [197, 412, 385], [287, 414, 390], [313, 413, 390], [861, 308, 260], [903, 283, 262]].forEach(function (s) {
        down += "M" + snap(X(s[0])) + " " + Y(s[1]) + "V" + Y(s[2]);
    });
    down += "M" + snap(X(410)) + " " + Y(536) + "V" + Y(485);
    up += "M" + snap(X(404)) + " " + Y(465) + "V" + Y(410) + "M" + snap(X(170)) + " " + Y(403) + "V" + Y(360);
    add(g, "path", { d: up, stroke: "#5cc45c", fill: "none" });
    add(g, "path", { d: down, stroke: "#d06a6a", fill: "none" });

    function curve(values, color, dash) {
        var pts = [];
        for (var i = 22; i < values.length; i += 2) pts.push([X(i + 2), Y(values[i])]);
        add(g, "path", { d: path(pts), fill: "none", stroke: color, "stroke-width": 1, "stroke-dasharray": dash });
    }
    curve(fast, "#1c7a44", "5 3");
    curve(slow, "#2828c8", "4 4");
    add(g, "path", {
        d: path(LONG_MA.map(function (p) { return [X(p[0]), Y(p[1])]; })),
        fill: "none", stroke: "#30b8ec", "stroke-width": 1.2, "stroke-dasharray": "4 4"
    });

    // entries and exits
    cross(g, X(269), 116 * k);
    cross(g, X(273), 116 * k);
    [[103, 157], [259, 114]].forEach(function (r) {
        add(g, "rect", { x: snap(X(r[0])), y: snap(r[1] * k), width: 12, height: 6, fill: "#f8a428", stroke: "#b87010" });
    });
    cross(g, X(540), 201 * k);
    cross(g, X(672), 263 * k);
    [[108, 207], [258, 164], [262, 164], [535, 236], [669, 286]].forEach(function (a) {
        arrow(g, Math.round(X(a[0])), Math.round(a[1] * k));
    });

    // open trades, at the bottom
    var b = c.bottom;
    [[83, 50, "1@300,5"], [236, 50, ""], [232, 50, "1@356,8"], [510, 50, "1@273,0"], [644, 50, "1@201,3"]].forEach(function (t) {
        var x = snap(X(t[0])) - 1, y = b - 17;
        add(g, "path", { d: "M" + x + " " + b + "V" + (y + 3) + "q0-3 3-3h" + (t[1] - 6) + "q3 0 3 3V" + b + "z", fill: "#d0e0fb", stroke: "#6a9cf0" });
        label(g, x + 3, b - 4, t[2]);
    });
    label(g, 3, b - 2, "© IT-Finance.com");
    label(g, 92, b - 2, "Data is indicative", { "font-style": "italic" });
    add(g, "rect", { x: 0.5, y: 0.5, width: c.right - 0.5, height: b - 0.5, fill: "none", stroke: LINE });

    for (var p = 150; p <= 550; p += 50) {
        if (p !== 250) tick(c, Y(p), String(p), p === 500);
    }
    var x = c.right + 4, y = snap(Y(251)) - 1;
    [[-5, "#2828b8"], [0, "#30b8ec"], [2, "#1c7a44"]].forEach(function (m) {
        line(g, c.right, y + m[0], x, y + m[0], m[1]);
    });
    tag(g, x, y - 18, 37, "256,22", "#3838c8");
    tag(g, x, y, 37, "248,83", "#1c8a44");
    tag(g, x, y - 10, 37, "251,83", "#30b8ec");
    add(g, "rect", { x: x, y: y - 7, width: 31, height: 15, fill: "#ffd400", stroke: "#7a6a10" });
    label(g, x + 2, y + 5, "251,3");

    // years
    [98, 249, 391, 525, 660, 794, 928].forEach(function (i, n) {
        line(g, snap(X(i)) - 1, b, snap(X(i)) - 1, b + 4);
        label(g, snap(X(i)) - 1, b + 17, 2012 + n, { "text-anchor": "middle" });
    });
}

function draw() {
    drawPerf();
    drawEquity();
    drawPositions();
    drawPrice();
}

draw();
window.addEventListener("resize", draw);
```
